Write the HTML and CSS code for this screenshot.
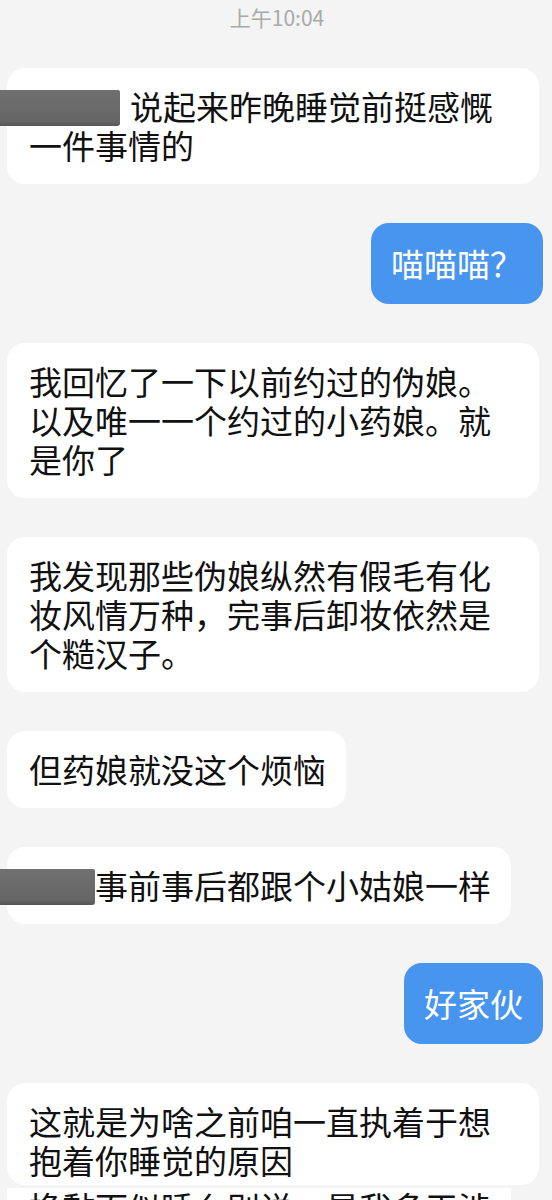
FILE: index.html
```html
<!DOCTYPE html>
<html lang="zh-CN">
<head>
  <meta charset="UTF-8" />
  <meta name="viewport" content="width=device-width, initial-scale=1" />
  <title>聊天记录</title>
  <link rel="stylesheet" href="styles.css">
</head>
<body>

  <div class="hora">上午10:04</div>

  <div class="chat">
    <div class="msg esq">
      <span class="tarja tarja-longa"></span>说起来昨晚睡觉前挺感慨一件事情的
    </div>

    <div class="msg dir">喵喵喵？</div>

    <div class="msg esq">我回忆了一下以前约过的伪娘。以及唯一一个约过的小药娘。就是你了</div>

    <div class="msg esq">我发现那些伪娘纵然有假毛有化妆风情万种，完事后卸妆依然是个糙汉子。</div>

    <div class="msg esq">但药娘就没这个烦恼</div>

    <div class="msg esq">
      <span class="tarja tarja-curta"></span>事前事后都跟个小姑娘一样
    </div>

    <div class="msg dir">好家伙</div>

    <!-- print emendado: a bolha continua no pedaço de baixo -->
    <div class="emenda">
      <div class="msg esq cortada">这就是为啥之前咱一直执着于想抱着你睡觉的原因</div>
      <div class="msg esq resto">换黏面似睡么别说一是我多干涉</div>
    </div>
  </div>

</body>
</html>
```

FILE: styles.css
```css
body {
  margin: 0;
  background: #f4f4f4;
  font-family: "Noto Sans CJK SC", "Noto Sans", sans-serif;
  color: #111;
  overflow: hidden;
}

.hora {
  text-align: center;
  font-size: 21px;
  line-height: 34px;
  color: #a9a9a9;
  padding-left: 2px;
}

.chat {
  display: flex;
  flex-direction: column;
  gap: 39px;
  padding: 34px 9px 0 7px;
}

.msg {
  font-size: 33px;
  line-height: 39px;
  border-radius: 18px;
  word-break: break-all;
}

.esq {
  align-self: flex-start;
  background: #fff;
  padding: 19px 20px 19px 22px;
  max-width: 490px;
}

.dir {
  align-self: flex-end;
  background: #4795ee;
  color: #fff;
  padding: 21px 20px;
}

.tarja {
  display: inline-block;
  height: 36px;
  vertical-align: -6px;
  margin-left: -29px;
  background: linear-gradient(#707070, #666 85%, #555);
  border-radius: 0 2px 3px 0;
}

.tarja-longa {
  width: 120px;
  margin-right: 10px;
}

.tarja-curta {
  width: 95px;
  margin-right: 0;
}

.emenda {
  display: flex;
  flex-direction: column;
  gap: 3px;
}

.cortada {
  padding-bottom: 5px;
}

.resto {
  padding-top: 0;
  border-radius: 0;
}
```
